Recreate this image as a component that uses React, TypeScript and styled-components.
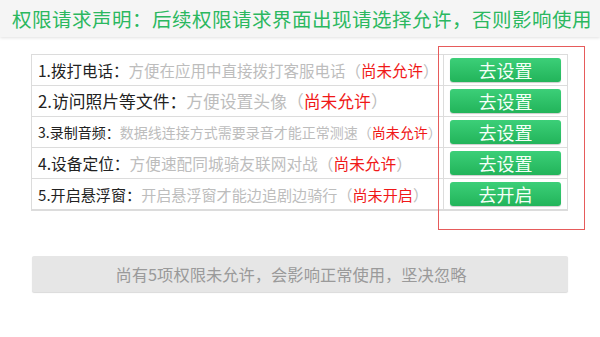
import React from "react";
import styled, { createGlobalStyle } from "styled-components";

interface Permission {
  label: string;
  desc: string;
  status: string;
  action: string;
  size: number;
}

const permissions: Permission[] = [
  { label: "1.拨打电话：", desc: "方便在应用中直接拨打客服电话", status: "尚未允许", action: "去设置", size: 15.5 },
  { label: "2.访问照片等文件：", desc: "方便设置头像", status: "尚未允许", action: "去设置", size: 16.8 },
  { label: "3.录制音频：", desc: "数据线连接方式需要录音才能正常测速", status: "尚未允许", action: "去设置", size: 14 },
  { label: "4.设备定位：", desc: "方便速配同城骑友联网对战", status: "尚未允许", action: "去设置", size: 15.7 },
  { label: "5.开启悬浮窗：", desc: "开启悬浮窗才能边追剧边骑行", status: "尚未开启", action: "去开启", size: 15.1 },
];

const GlobalStyle = createGlobalStyle`
  body {
    margin: 0;
    background: #fff;
    font-family: "Noto Sans CJK SC", "Noto Sans", sans-serif;
  }
`;

const Page = styled.div`
  position: relative;
  width: 600px;
  height: 337px;
  overflow: hidden;
`;

const Header = styled.div`
  height: 37px;
  background: #f5f5f5;
  box-shadow: 0 1px 3px rgba(0, 0, 0, 0.12);
  display: flex;
  align-items: center;
  padding-left: 12px;
  color: #2bb85f;
  font-size: 19.5px;
  letter-spacing: 0.5px;
  white-space: nowrap;
`;

const Table = styled.div`
  margin: 17px 0 0 31px;
  width: 537px;
  border: 1px solid #dcdcdc;
  border-bottom-width: 2px;
  box-sizing: border-box;
  background: #fff;
`;

const Row = styled.div`
  display: flex;
  height: 30px;
  & + & {
    border-top: 1px solid #dcdcdc;
  }
`;

const Info = styled.div<{ $size: number }>`
  flex: 1;
  display: flex;
  align-items: center;
  padding-left: 6px;
  font-size: ${(p) => p.$size}px;
  white-space: nowrap;
  overflow: hidden;
  border-right: 1px solid #dcdcdc;
`;

const Label = styled.span`
  color: #222;
`;

const Desc = styled.span`
  color: #bdbdbd;
`;

const Status = styled.span`
  color: #f01818;
`;

const ActionCell = styled.div`
  width: 123px;
  display: flex;
  align-items: center;
  justify-content: center;
`;

const GreenButton = styled.button`
  width: 111px;
  height: 24px;
  border: none;
  border-radius: 3px;
  background: linear-gradient(#3ccf78, #22b45a);
  box-shadow: 0 1px 1px rgba(0, 0, 0, 0.2);
  color: #f4fff7;
  font-family: inherit;
  font-size: 18px;
  line-height: 24px;
  padding: 0;
`;

const IgnoreButton = styled.button`
  display: block;
  margin: 45px 0 0 32px;
  width: 536px;
  height: 36px;
  border: none;
  border-radius: 2px;
  background: #e6e6e6;
  box-shadow: 0 1px 1px rgba(0, 0, 0, 0.15);
  color: #9a9a9a;
  font-family: inherit;
  font-size: 16.3px;
  padding: 0 18px 0 0;
`;

const Highlight = styled.div`
  position: absolute;
  left: 438px;
  top: 46px;
  width: 147px;
  height: 184px;
  border: 1.5px solid #e65b5b;
  box-sizing: border-box;
  pointer-events: none;
`;

export default function App() {
  return (
    <Page>
      <GlobalStyle />
      <Header>权限请求声明：后续权限请求界面出现请选择允许，否则影响使用</Header>
      <Table>
        {permissions.map((p) => (
          <Row key={p.label}>
            <Info $size={p.size}>
              <Label>{p.label}</Label>
              <Desc>
                {p.desc}（<Status>{p.status}</Status>）
              </Desc>
            </Info>
            <ActionCell>
              <GreenButton>{p.action}</GreenButton>
            </ActionCell>
          </Row>
        ))}
      </Table>
      <IgnoreButton>尚有5项权限未允许，会影响正常使用，坚决忽略</IgnoreButton>
      <Highlight />
    </Page>
  );
}
